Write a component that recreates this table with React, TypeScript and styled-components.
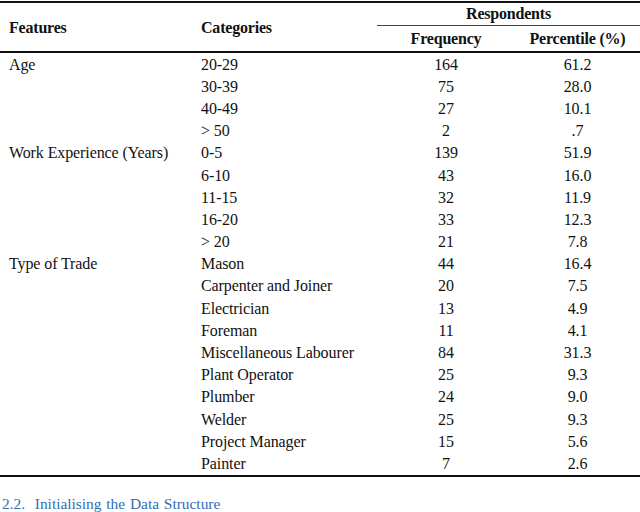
import React from "react";
import styled, { createGlobalStyle } from "styled-components";

const Global = createGlobalStyle`
  html, body { margin: 0; padding: 0; background: #fff; }
  body { font-family: "Liberation Serif", "Times New Roman", serif; color: #111; }
`;

const Page = styled.div`
  width: 640px;
  height: 512px;
  overflow: hidden;
  padding-top: 1px;
  box-sizing: border-box;
`;

const Table = styled.div`
  border-top: 2px solid #111;
  border-bottom: 2px solid #111;
`;

const cols = "192px 185px 138px 125px";

const Head = styled.div`
  display: grid;
  grid-template-columns: ${cols};
  grid-template-rows: 23px 25px;
  border-bottom: 2px solid #111;
  font-weight: bold;
  font-size: 16px;
  letter-spacing: -0.2px;
`;

const HeadCell = styled.div<{ $span?: boolean; $col?: string; $center?: boolean; $line?: boolean }>`
  display: flex;
  align-items: center;
  justify-content: ${(p) => (p.$center ? "center" : "flex-start")};
  padding-left: ${(p) => (p.$center ? "0" : "9px")};
  padding-top: ${(p) => (p.$span ? "1px" : "0")};
  grid-row: ${(p) => (p.$span ? "1 / span 2" : "auto")};
  grid-column: ${(p) => p.$col ?? "auto"};
  border-bottom: ${(p) => (p.$line ? "1px solid #444" : "none")};
`;

const Row = styled.div`
  display: grid;
  grid-template-columns: ${cols};
  height: 22.2px;
  align-items: center;
  font-size: 16px;
  letter-spacing: -0.1px;
`;

const Cell = styled.div<{ $center?: boolean }>`
  text-align: ${(p) => (p.$center ? "center" : "left")};
  padding-left: ${(p) => (p.$center ? "0" : "9px")};
  white-space: nowrap;
  padding-top: 1px;
`;

const Caption = styled.div`
  margin-top: 18px;
  padding-left: 2px;
  color: #2f6db5;
  font-size: 15.4px;
  word-spacing: 1px;
`;

type R = [string, string, string, string];

const rows: R[] = [
  ["Age", "20-29", "164", "61.2"],
  ["", "30-39", "75", "28.0"],
  ["", "40-49", "27", "10.1"],
  ["", "> 50", "2", ".7"],
  ["Work Experience (Years)", "0-5", "139", "51.9"],
  ["", "6-10", "43", "16.0"],
  ["", "11-15", "32", "11.9"],
  ["", "16-20", "33", "12.3"],
  ["", "> 20", "21", "7.8"],
  ["Type of Trade", "Mason", "44", "16.4"],
  ["", "Carpenter and Joiner", "20", "7.5"],
  ["", "Electrician", "13", "4.9"],
  ["", "Foreman", "11", "4.1"],
  ["", "Miscellaneous Labourer", "84", "31.3"],
  ["", "Plant Operator", "25", "9.3"],
  ["", "Plumber", "24", "9.0"],
  ["", "Welder", "25", "9.3"],
  ["", "Project Manager", "15", "5.6"],
  ["", "Painter", "7", "2.6"],
];

export default function App() {
  return (
    <Page>
      <Global />
      <Table>
        <Head>
          <HeadCell $span $col="1">Features</HeadCell>
          <HeadCell $span $col="2">Categories</HeadCell>
          <HeadCell $center $line $col="3 / span 2">Respondents</HeadCell>
          <HeadCell $center $col="3">Frequency</HeadCell>
          <HeadCell $center $col="4">Percentile (%)</HeadCell>
        </Head>
        {rows.map((r, i) => (
          <Row key={i}>
            <Cell>{r[0]}</Cell>
            <Cell>{r[1]}</Cell>
            <Cell $center>{r[2]}</Cell>
            <Cell $center>{r[3]}</Cell>
          </Row>
        ))}
      </Table>
      <Caption>2.2.&nbsp; Initialising the Data Structure</Caption>
    </Page>
  );
}
